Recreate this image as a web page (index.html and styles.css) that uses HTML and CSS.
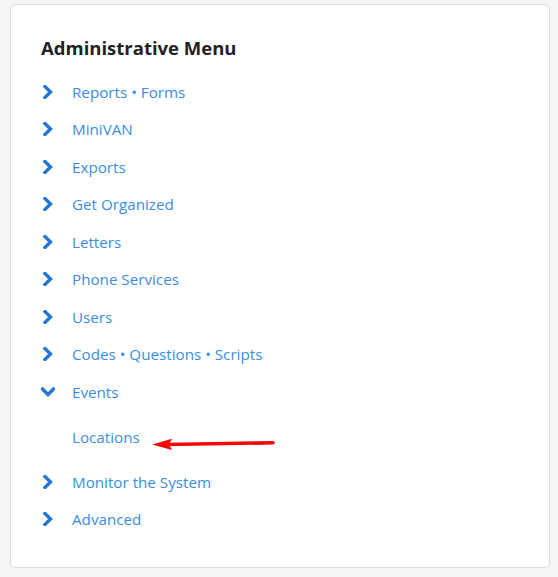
FILE: index.html
```html
<!DOCTYPE html>
<html>
<head>
<meta charset="utf-8">
<link rel="stylesheet" href="styles.css">
</head>
<body>
<div class="card">
  <h2 class="title">Administrative Menu</h2>
  <ul class="menu">
    <li class="item"><svg class="chev" viewBox="0 0 10 14"><path d="M2 1.5 L7.5 7 L2 12.5" /></svg><a>Reports • Forms</a></li>
    <li class="item"><svg class="chev" viewBox="0 0 10 14"><path d="M2 1.5 L7.5 7 L2 12.5" /></svg><a>MiniVAN</a></li>
    <li class="item"><svg class="chev" viewBox="0 0 10 14"><path d="M2 1.5 L7.5 7 L2 12.5" /></svg><a>Exports</a></li>
    <li class="item"><svg class="chev" viewBox="0 0 10 14"><path d="M2 1.5 L7.5 7 L2 12.5" /></svg><a>Get Organized</a></li>
    <li class="item"><svg class="chev" viewBox="0 0 10 14"><path d="M2 1.5 L7.5 7 L2 12.5" /></svg><a>Letters</a></li>
    <li class="item"><svg class="chev" viewBox="0 0 10 14"><path d="M2 1.5 L7.5 7 L2 12.5" /></svg><a>Phone Services</a></li>
    <li class="item"><svg class="chev" viewBox="0 0 10 14"><path d="M2 1.5 L7.5 7 L2 12.5" /></svg><a>Users</a></li>
    <li class="item"><svg class="chev" viewBox="0 0 10 14"><path d="M2 1.5 L7.5 7 L2 12.5" /></svg><a>Codes • Questions • Scripts</a></li>
    <li class="item open"><svg class="chev down" viewBox="0 0 14 10"><path d="M1.5 2 L7 7.5 L12.5 2" /></svg><a>Events</a></li>
    <li class="sub"><a>Locations</a><span class="arrow"><svg viewBox="0 0 124 14" width="124" height="14"><path class="shaft" d="M14 7.5 L121 5.8"/><polygon class="head" points="0,7.5 20,1.8 17,7.5 20,13"/></svg></span></li>
    <li class="item"><svg class="chev" viewBox="0 0 10 14"><path d="M2 1.5 L7.5 7 L2 12.5" /></svg><a>Monitor the System</a></li>
    <li class="item"><svg class="chev" viewBox="0 0 10 14"><path d="M2 1.5 L7.5 7 L2 12.5" /></svg><a>Advanced</a></li>
  </ul>
</div>
</body>
</html>
```
FILE: styles.css
```css
html, body {
  margin: 0;
  padding: 0;
  background: #f4f5f7;
  font-family: "Open Sans", "Noto Sans", "Liberation Sans", sans-serif;
}
.card {
  box-sizing: border-box;
  margin: 4px 0 0 10px;
  width: 540px;
  height: 564px;
  background: #fff;
  border: 1px solid #dcdee2;
  border-radius: 5px;
  padding: 31px 0 0 30px;
}
.title {
  margin: 0 0 13px 0;
  font-size: 18.5px;
  font-weight: 700;
  color: #1f2226;
  line-height: 24px;
}
.menu {
  list-style: none;
  margin: 0;
  padding: 0;
}
.item {
  display: flex;
  align-items: center;
  height: 37.5px;
}
.item a, .sub a {
  color: #3a8ee0;
  font-size: 15.2px;
}
.chev {
  width: 10px;
  height: 14px;
  margin: 0 19px 0 2px;
  flex: none;
}
.chev.down {
  width: 14px;
  height: 10px;
  margin: 0 17px 0 0;
}
.chev path {
  fill: none;
  stroke: #2577d4;
  stroke-width: 3.4;
  stroke-linecap: square;
  stroke-linejoin: miter;
}
.sub {
  display: flex;
  align-items: center;
  height: 52px;
  padding-left: 31px;
  margin-top: 0.5px;
}
.arrow {
  display: flex;
  margin-left: 12px;
  margin-top: 14px;
}
.arrow .shaft {
  stroke: #f00a0a;
  stroke-width: 3.6;
  stroke-linecap: round;
}
.arrow .head {
  fill: #f00a0a;
}
```
